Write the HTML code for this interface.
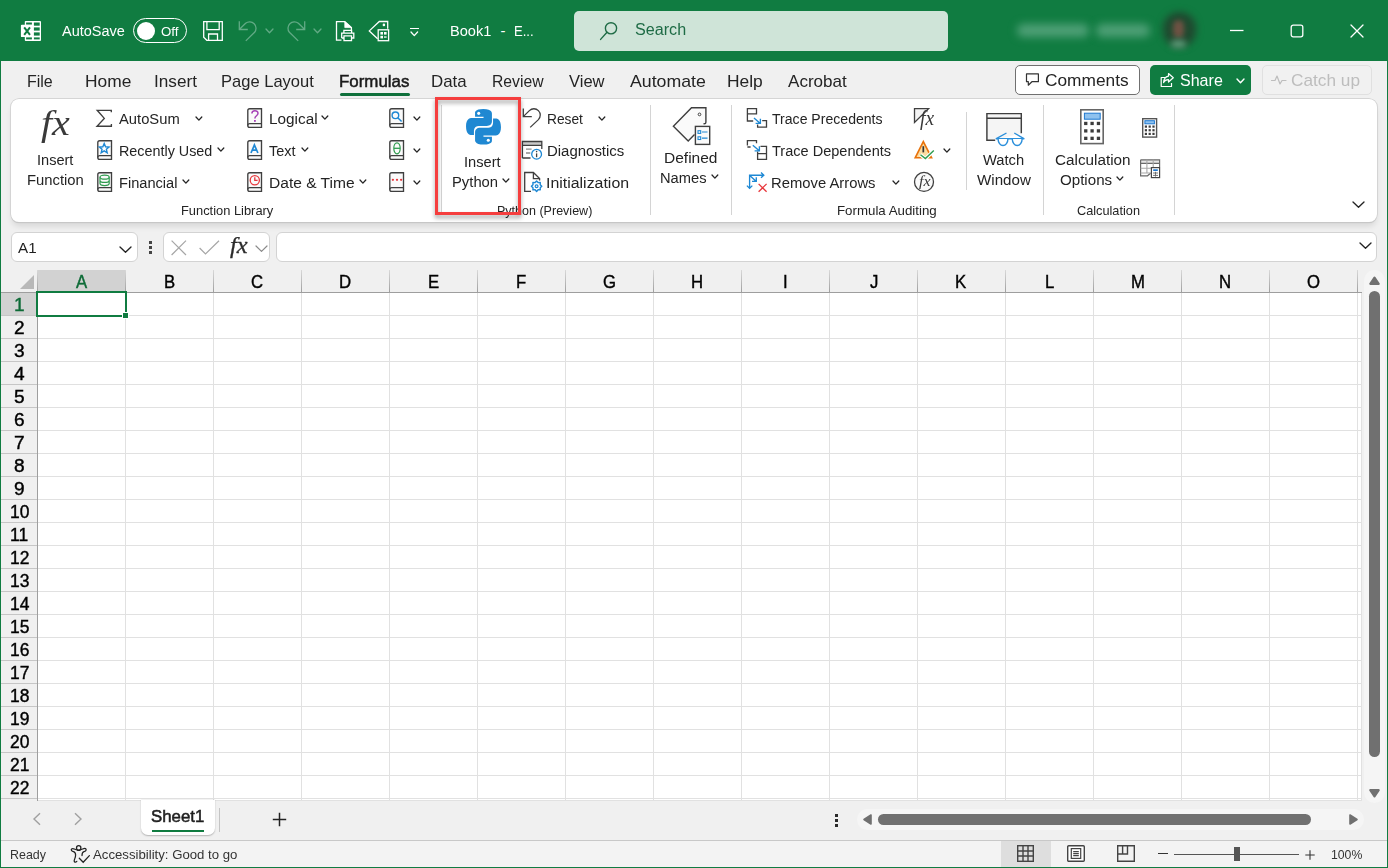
<!DOCTYPE html>
<html><head><meta charset="utf-8">
<style>
*{box-sizing:border-box;margin:0;padding:0}
html,body{width:1388px;height:868px;overflow:hidden;background:#f0f0f0;font-family:"Liberation Sans",sans-serif;color:#242424}
.a{position:absolute}
.t{position:absolute;white-space:nowrap;line-height:1}
svg{overflow:visible}
#win{position:absolute;left:0;top:0;width:1388px;height:868px;overflow:hidden;background:#f0f0f0}
</style></head><body><div id="win">
<div class="a" style="left:0px;top:0px;width:1388px;height:61px;background:#107c41;"></div>
<div class="t" style="left:62.30px;top:24.39px;font-size:14.9px;color:#fff;transform:scaleX(0.9734);transform-origin:0 0;font-family:'Liberation Sans',sans-serif;">AutoSave</div>
<div class="a" style="left:133px;top:18px;width:54px;height:25px;border:1.2px solid #fff;border-radius:13px"></div>
<div class="a" style="left:137px;top:22px;width:18px;height:18px;border-radius:9px;background:#fff"></div>
<div class="t" style="left:161.36px;top:25.59px;font-size:12.3px;color:#fff;transform:scaleX(1.0794);transform-origin:0 0;font-family:'Liberation Sans',sans-serif;">Off</div>
<div class="t" style="left:449.52px;top:24.39px;font-size:14.9px;color:#fff;transform:scaleX(0.9791);transform-origin:0 0;font-family:'Liberation Sans',sans-serif;">Book1</div>
<div class="t" style="left:500.50px;top:24.39px;font-size:14.9px;color:#fff;transform:scaleX(1.0000);transform-origin:0 0;font-family:'Liberation Sans',sans-serif;">-</div>
<div class="t" style="left:513.72px;top:24.39px;font-size:14.9px;color:#fff;transform:scaleX(0.8790);transform-origin:0 0;font-family:'Liberation Sans',sans-serif;">E...</div>
<div class="a" style="left:574px;top:11px;width:374px;height:40px;background:#cfe4d8;border-radius:5px"></div>
<svg class="a" style="left:598px;top:20px;" width="22" height="22" viewBox="0 0 22 22"><circle cx="13" cy="8.3" r="5.6" fill="none" stroke="#1e6b45" stroke-width="1.4"/><path d="M9 12.3 L2.6 19.4" stroke="#1e6b45" stroke-width="1.4" stroke-linecap="round"/></svg>
<div class="t" style="left:634.80px;top:22.46px;font-size:16px;color:#1e6b45;transform:scaleX(1.0091);transform-origin:0 0;font-family:'Liberation Sans',sans-serif;">Search</div>
<div class="a" style="left:1017px;top:24px;width:72px;height:13px;background:#4fa077;border-radius:6px;filter:blur(4px)"></div>
<div class="a" style="left:1096px;top:24px;width:54px;height:13px;background:#4fa077;border-radius:6px;filter:blur(4px)"></div>
<div class="a" style="left:1163px;top:12px;width:33px;height:35px;background:#1f4a30;border-radius:16px;filter:blur(3.5px)"></div>
<div class="a" style="left:1173px;top:20px;width:11px;height:18px;background:#6e5243;border-radius:6px;filter:blur(2.5px)"></div>
<div class="a" style="left:1171px;top:40px;width:15px;height:8px;background:#5d9a78;border-radius:4px;filter:blur(3px)"></div>
<svg class="a" style="left:1230px;top:25px;" width="14" height="12" viewBox="0 0 14 12"><path d="M0 5.5H13.5" stroke="#fff" stroke-width="1.3"/></svg>
<svg class="a" style="left:1290px;top:24px;" width="14" height="14" viewBox="0 0 14 14"><rect x="1.2" y="1.2" width="11.6" height="11.6" rx="2" fill="none" stroke="#fff" stroke-width="1.3"/></svg>
<svg class="a" style="left:1350px;top:24px;" width="14" height="14" viewBox="0 0 14 14"><path d="M1 1 L13 13 M13 1 L1 13" stroke="#fff" stroke-width="1.3" stroke-linecap="round"/></svg>
<div class="t" style="left:27.28px;top:73.12px;font-size:16.4px;color:#242424;transform:scaleX(0.9755);transform-origin:0 0;font-family:'Liberation Sans',sans-serif;">File</div>
<div class="t" style="left:84.68px;top:73.12px;font-size:16.4px;color:#242424;transform:scaleX(1.0595);transform-origin:0 0;font-family:'Liberation Sans',sans-serif;">Home</div>
<div class="t" style="left:154.03px;top:73.12px;font-size:16.4px;color:#242424;transform:scaleX(1.0481);transform-origin:0 0;font-family:'Liberation Sans',sans-serif;">Insert</div>
<div class="t" style="left:221.34px;top:73.12px;font-size:16.4px;color:#242424;transform:scaleX(1.0083);transform-origin:0 0;font-family:'Liberation Sans',sans-serif;">Page Layout</div>
<div class="t" style="left:338.71px;top:73.12px;font-size:16.4px;color:#1a1a1a;transform:scaleX(1.0307);transform-origin:0 0;font-family:'Liberation Sans',sans-serif;-webkit-text-stroke:.5px #1a1a1a;">Formulas</div>
<div class="a" style="left:339.5px;top:92.5px;width:70.5px;height:3px;background:#0f703b;border-radius:1.5px"></div>
<div class="t" style="left:431.31px;top:73.12px;font-size:16.4px;color:#242424;transform:scaleX(1.0299);transform-origin:0 0;font-family:'Liberation Sans',sans-serif;">Data</div>
<div class="t" style="left:491.80px;top:73.12px;font-size:16.4px;color:#242424;transform:scaleX(0.9592);transform-origin:0 0;font-family:'Liberation Sans',sans-serif;">Review</div>
<div class="t" style="left:569.00px;top:73.12px;font-size:16.4px;color:#242424;transform:scaleX(1.0085);transform-origin:0 0;font-family:'Liberation Sans',sans-serif;">View</div>
<div class="t" style="left:629.50px;top:73.12px;font-size:16.4px;color:#242424;transform:scaleX(1.0820);transform-origin:0 0;font-family:'Liberation Sans',sans-serif;">Automate</div>
<div class="t" style="left:727.47px;top:73.12px;font-size:16.4px;color:#242424;transform:scaleX(1.0614);transform-origin:0 0;font-family:'Liberation Sans',sans-serif;">Help</div>
<div class="t" style="left:787.70px;top:73.12px;font-size:16.4px;color:#242424;transform:scaleX(1.0407);transform-origin:0 0;font-family:'Liberation Sans',sans-serif;">Acrobat</div>
<div class="a" style="left:1015px;top:65px;width:125px;height:30px;background:#fff;border:1px solid #707070;border-radius:5px"></div>
<svg class="a" style="left:1025px;top:72px;" width="16" height="15" viewBox="0 0 16 15"><path d="M1.5 1.9 H13.4 V9.7 H6.9 L3.3 13.2 V9.7 H1.5 Z" fill="none" stroke="#333" stroke-width="1.2" stroke-linejoin="round"/></svg>
<div class="t" style="left:1044.71px;top:72.12px;font-size:16.4px;color:#242424;transform:scaleX(1.0551);transform-origin:0 0;font-family:'Liberation Sans',sans-serif;">Comments</div>
<div class="a" style="left:1150px;top:65px;width:101px;height:30px;background:#107c41;border-radius:5px"></div>
<svg class="a" style="left:1159px;top:72px;" width="16" height="16" viewBox="0 0 16 16"><path d="M6 5.5 H2.2 V14.5 H12.5 V11" fill="none" stroke="#fff" stroke-width="1.2" stroke-linejoin="round"/><path d="M9.5 1.5 L14.3 5.8 L9.5 10 V7.6 C7.2 7.5 5.6 8.4 4.6 10.6 C4.8 7 6.5 4.6 9.5 4.1 Z" fill="none" stroke="#fff" stroke-width="1.2" stroke-linejoin="round"/></svg>
<div class="t" style="left:1180.07px;top:72.12px;font-size:16.4px;color:#fff;transform:scaleX(0.9788);transform-origin:0 0;font-family:'Liberation Sans',sans-serif;">Share</div>
<svg class="a" style="left:1234.9px;top:76.5px;" width="11" height="7.8" viewBox="0 0 11 7.8"><path d="M2 2 L5.5 5.8 L9 2" fill="none" stroke="#fff" stroke-width="1.4" stroke-linecap="round" stroke-linejoin="round"/></svg>
<div class="a" style="left:1261.5px;top:65px;width:110.5px;height:30px;background:#f1f1f1;border:1px solid #e0e0e0;border-radius:5px"></div>
<svg class="a" style="left:1271px;top:73px;" width="16" height="14" viewBox="0 0 16 14"><path d="M.5 7.5 H4 L6 3 L9 11 L11 7.5 H15" fill="none" stroke="#bdbdbd" stroke-width="1.2" stroke-linejoin="round" stroke-linecap="round"/></svg>
<div class="t" style="left:1291.21px;top:72.12px;font-size:16.4px;color:#bdbdbd;transform:scaleX(1.0521);transform-origin:0 0;font-family:'Liberation Sans',sans-serif;">Catch up</div>
<div class="a" style="left:11px;top:99px;width:1366px;height:122.5px;background:#fff;border-radius:8px;box-shadow:0 0 0 .7px #cdcdcd,0 .6px .8px rgba(0,0,0,.18),0 5px 6px -1px rgba(0,0,0,.11)"></div>
<div class="a" style="left:441px;top:105px;width:1px;height:110px;background:#d4d4d4;"></div>
<div class="a" style="left:649.5px;top:105px;width:1px;height:110px;background:#d4d4d4;"></div>
<div class="a" style="left:731px;top:105px;width:1px;height:110px;background:#d4d4d4;"></div>
<div class="a" style="left:1043px;top:105px;width:1px;height:110px;background:#d4d4d4;"></div>
<div class="a" style="left:1174px;top:105px;width:1px;height:110px;background:#d4d4d4;"></div>
<div class="a" style="left:966px;top:112px;width:1px;height:78px;background:#d4d4d4;"></div>
<div class="t" style="left:37.46px;top:152.56px;font-size:14.7px;color:#242424;transform:scaleX(0.9915);transform-origin:0 0;font-family:'Liberation Sans',sans-serif;">Insert</div>
<div class="t" style="left:27.49px;top:172.56px;font-size:14.7px;color:#242424;transform:scaleX(1.0092);transform-origin:0 0;font-family:'Liberation Sans',sans-serif;">Function</div>
<div class="t" style="left:119.30px;top:111.56px;font-size:14.7px;color:#242424;transform:scaleX(1.0042);transform-origin:0 0;font-family:'Liberation Sans',sans-serif;">AutoSum</div>
<svg class="a" style="left:194.3px;top:115.05px;" width="9.8" height="7.1" viewBox="0 0 9.8 7.1"><path d="M2 2 L4.9 5.1 L7.8 2" fill="none" stroke="#242424" stroke-width="1.3" stroke-linecap="round" stroke-linejoin="round"/></svg>
<div class="t" style="left:118.72px;top:143.56px;font-size:14.7px;color:#242424;transform:scaleX(0.9771);transform-origin:0 0;font-family:'Liberation Sans',sans-serif;">Recently Used</div>
<svg class="a" style="left:215.6px;top:146.45px;" width="9.8" height="7.1" viewBox="0 0 9.8 7.1"><path d="M2 2 L4.9 5.1 L7.8 2" fill="none" stroke="#242424" stroke-width="1.3" stroke-linecap="round" stroke-linejoin="round"/></svg>
<div class="t" style="left:118.71px;top:175.56px;font-size:14.7px;color:#242424;transform:scaleX(0.9947);transform-origin:0 0;font-family:'Liberation Sans',sans-serif;">Financial</div>
<svg class="a" style="left:180.6px;top:177.95px;" width="9.8" height="7.1" viewBox="0 0 9.8 7.1"><path d="M2 2 L4.9 5.1 L7.8 2" fill="none" stroke="#242424" stroke-width="1.3" stroke-linecap="round" stroke-linejoin="round"/></svg>
<div class="t" style="left:268.56px;top:111.56px;font-size:14.7px;color:#242424;transform:scaleX(1.0436);transform-origin:0 0;font-family:'Liberation Sans',sans-serif;">Logical</div>
<svg class="a" style="left:320.4px;top:114.45px;" width="9.8" height="7.1" viewBox="0 0 9.8 7.1"><path d="M2 2 L4.9 5.1 L7.8 2" fill="none" stroke="#242424" stroke-width="1.3" stroke-linecap="round" stroke-linejoin="round"/></svg>
<div class="t" style="left:269.35px;top:143.56px;font-size:14.7px;color:#242424;transform:scaleX(0.9832);transform-origin:0 0;font-family:'Liberation Sans',sans-serif;">Text</div>
<svg class="a" style="left:299.6px;top:146.05px;" width="9.8" height="7.1" viewBox="0 0 9.8 7.1"><path d="M2 2 L4.9 5.1 L7.8 2" fill="none" stroke="#242424" stroke-width="1.3" stroke-linecap="round" stroke-linejoin="round"/></svg>
<div class="t" style="left:268.54px;top:175.56px;font-size:14.7px;color:#242424;transform:scaleX(1.0591);transform-origin:0 0;font-family:'Liberation Sans',sans-serif;">Date &amp; Time</div>
<svg class="a" style="left:357.6px;top:177.95px;" width="9.8" height="7.1" viewBox="0 0 9.8 7.1"><path d="M2 2 L4.9 5.1 L7.8 2" fill="none" stroke="#242424" stroke-width="1.3" stroke-linecap="round" stroke-linejoin="round"/></svg>
<svg class="a" style="left:412.4px;top:114.75px;" width="9.8" height="7.1" viewBox="0 0 9.8 7.1"><path d="M2 2 L4.9 5.1 L7.8 2" fill="none" stroke="#242424" stroke-width="1.3" stroke-linecap="round" stroke-linejoin="round"/></svg>
<svg class="a" style="left:412.4px;top:146.75px;" width="9.8" height="7.1" viewBox="0 0 9.8 7.1"><path d="M2 2 L4.9 5.1 L7.8 2" fill="none" stroke="#242424" stroke-width="1.3" stroke-linecap="round" stroke-linejoin="round"/></svg>
<svg class="a" style="left:412.4px;top:178.75px;" width="9.8" height="7.1" viewBox="0 0 9.8 7.1"><path d="M2 2 L4.9 5.1 L7.8 2" fill="none" stroke="#242424" stroke-width="1.3" stroke-linecap="round" stroke-linejoin="round"/></svg>
<div class="t" style="left:181.36px;top:204.50px;font-size:12.4px;color:#242424;transform:scaleX(1.0386);transform-origin:0 0;font-family:'Liberation Sans',sans-serif;">Function Library</div>
<div class="t" style="left:496.59px;top:204.50px;font-size:12.4px;color:#242424;transform:scaleX(1.0102);transform-origin:0 0;font-family:'Liberation Sans',sans-serif;">Python (Preview)</div>
<div class="t" style="left:464.05px;top:154.56px;font-size:14.7px;color:#242424;transform:scaleX(0.9972);transform-origin:0 0;font-family:'Liberation Sans',sans-serif;">Insert</div>
<div class="t" style="left:452.49px;top:174.56px;font-size:14.7px;color:#242424;transform:scaleX(1.0080);transform-origin:0 0;font-family:'Liberation Sans',sans-serif;">Python</div>
<svg class="a" style="left:501.4px;top:176.95px;" width="9.8" height="7.1" viewBox="0 0 9.8 7.1"><path d="M2 2 L4.9 5.1 L7.8 2" fill="none" stroke="#242424" stroke-width="1.3" stroke-linecap="round" stroke-linejoin="round"/></svg>
<div class="t" style="left:546.86px;top:111.56px;font-size:14.7px;color:#242424;transform:scaleX(0.9369);transform-origin:0 0;font-family:'Liberation Sans',sans-serif;">Reset</div>
<svg class="a" style="left:597.3px;top:114.75px;" width="9.8" height="7.1" viewBox="0 0 9.8 7.1"><path d="M2 2 L4.9 5.1 L7.8 2" fill="none" stroke="#242424" stroke-width="1.3" stroke-linecap="round" stroke-linejoin="round"/></svg>
<div class="t" style="left:546.78px;top:143.56px;font-size:14.7px;color:#242424;transform:scaleX(1.0181);transform-origin:0 0;font-family:'Liberation Sans',sans-serif;">Diagnostics</div>
<div class="t" style="left:546.45px;top:175.56px;font-size:14.7px;color:#242424;transform:scaleX(1.0823);transform-origin:0 0;font-family:'Liberation Sans',sans-serif;">Initialization</div>
<div class="t" style="left:663.74px;top:150.56px;font-size:14.7px;color:#242424;transform:scaleX(1.0564);transform-origin:0 0;font-family:'Liberation Sans',sans-serif;">Defined</div>
<div class="t" style="left:659.80px;top:170.56px;font-size:14.7px;color:#242424;transform:scaleX(0.9989);transform-origin:0 0;font-family:'Liberation Sans',sans-serif;">Names</div>
<svg class="a" style="left:709.8px;top:173.05px;" width="9.8" height="7.1" viewBox="0 0 9.8 7.1"><path d="M2 2 L4.9 5.1 L7.8 2" fill="none" stroke="#242424" stroke-width="1.3" stroke-linecap="round" stroke-linejoin="round"/></svg>
<div class="t" style="left:772.06px;top:111.56px;font-size:14.7px;color:#242424;transform:scaleX(0.9583);transform-origin:0 0;font-family:'Liberation Sans',sans-serif;">Trace Precedents</div>
<div class="t" style="left:772.05px;top:143.56px;font-size:14.7px;color:#242424;transform:scaleX(0.9896);transform-origin:0 0;font-family:'Liberation Sans',sans-serif;">Trace Dependents</div>
<div class="t" style="left:771.29px;top:175.56px;font-size:14.7px;color:#242424;transform:scaleX(1.0078);transform-origin:0 0;font-family:'Liberation Sans',sans-serif;">Remove Arrows</div>
<svg class="a" style="left:890.5px;top:178.65px;" width="9.8" height="7.1" viewBox="0 0 9.8 7.1"><path d="M2 2 L4.9 5.1 L7.8 2" fill="none" stroke="#242424" stroke-width="1.3" stroke-linecap="round" stroke-linejoin="round"/></svg>
<svg class="a" style="left:942.4px;top:147.05px;" width="9.8" height="7.1" viewBox="0 0 9.8 7.1"><path d="M2 2 L4.9 5.1 L7.8 2" fill="none" stroke="#242424" stroke-width="1.3" stroke-linecap="round" stroke-linejoin="round"/></svg>
<div class="t" style="left:837.43px;top:204.50px;font-size:12.4px;color:#242424;transform:scaleX(1.0721);transform-origin:0 0;font-family:'Liberation Sans',sans-serif;">Formula Auditing</div>
<div class="t" style="left:983.10px;top:152.56px;font-size:14.7px;color:#242424;transform:scaleX(1.0012);transform-origin:0 0;font-family:'Liberation Sans',sans-serif;">Watch</div>
<div class="t" style="left:976.70px;top:172.56px;font-size:14.7px;color:#242424;transform:scaleX(1.0305);transform-origin:0 0;font-family:'Liberation Sans',sans-serif;">Window</div>
<div class="t" style="left:1055.22px;top:152.56px;font-size:14.7px;color:#242424;transform:scaleX(1.0394);transform-origin:0 0;font-family:'Liberation Sans',sans-serif;">Calculation</div>
<div class="t" style="left:1059.89px;top:172.56px;font-size:14.7px;color:#242424;transform:scaleX(1.0291);transform-origin:0 0;font-family:'Liberation Sans',sans-serif;">Options</div>
<svg class="a" style="left:1115.4px;top:175.25px;" width="9.8" height="7.1" viewBox="0 0 9.8 7.1"><path d="M2 2 L4.9 5.1 L7.8 2" fill="none" stroke="#242424" stroke-width="1.3" stroke-linecap="round" stroke-linejoin="round"/></svg>
<div class="t" style="left:1077.19px;top:204.50px;font-size:12.4px;color:#242424;transform:scaleX(1.0274);transform-origin:0 0;font-family:'Liberation Sans',sans-serif;">Calculation</div>
<svg class="a" style="left:1351.1px;top:200.05px;" width="15" height="9.3" viewBox="0 0 15 9.3"><path d="M2 2 L7.5 7.3 L13 2" fill="none" stroke="#242424" stroke-width="1.35" stroke-linecap="round" stroke-linejoin="round"/></svg>
<div class="a" style="left:11px;top:232px;width:127px;height:30px;background:#fff;border:1px solid #d3d3d3;border-radius:6px"></div>
<div class="a" style="left:163px;top:232px;width:107px;height:30px;background:#fff;border:1px solid #d3d3d3;border-radius:6px"></div>
<div class="a" style="left:275.5px;top:232px;width:1101.5px;height:30px;background:#fff;border:1px solid #d3d3d3;border-radius:6px"></div>
<div class="t" style="left:18.40px;top:240.18px;font-size:15.5px;color:#1f1f1f;transform:scaleX(0.9808);transform-origin:0 0;font-family:'Liberation Sans',sans-serif;">A1</div>
<svg class="a" style="left:117.5px;top:244.85px;" width="15" height="9.3" viewBox="0 0 15 9.3"><path d="M2 2 L7.5 7.3 L13 2" fill="none" stroke="#242424" stroke-width="1.35" stroke-linecap="round" stroke-linejoin="round"/></svg>
<div class="a" style="left:149.3px;top:240.7px;width:3px;height:3px;background:#444;"></div>
<div class="a" style="left:149.3px;top:246px;width:3px;height:3px;background:#444;"></div>
<div class="a" style="left:149.3px;top:251.3px;width:3px;height:3px;background:#444;"></div>
<svg class="a" style="left:171px;top:239.5px;" width="16" height="16" viewBox="0 0 16 16"><path d="M.6 .6 L15 15 M15 .6 L.6 15" stroke="#a6a6a6" stroke-width="1.2"/></svg>
<svg class="a" style="left:198.5px;top:239.5px;" width="21" height="15" viewBox="0 0 21 15"><path d="M.6 8 L6.5 14 L20 .8" fill="none" stroke="#a6a6a6" stroke-width="1.2"/></svg>
<div class="t" style="left:230.13px;top:234.56px;font-size:22.5px;color:#2b2b2b;transform:scaleX(1.0875);transform-origin:0 0;font-family:'Liberation Serif',serif;font-style:italic;-webkit-text-stroke:.3px #2b2b2b;">fx</div>
<svg class="a" style="left:253.5px;top:243.5px;" width="15" height="9.4" viewBox="0 0 15 9.4"><path d="M2 2 L7.5 7.4 L13 2" fill="none" stroke="#8a8a8a" stroke-width="1.2" stroke-linecap="round" stroke-linejoin="round"/></svg>
<svg class="a" style="left:1358.1px;top:241.35px;" width="15" height="9.3" viewBox="0 0 15 9.3"><path d="M2 2 L7.5 7.3 L13 2" fill="none" stroke="#242424" stroke-width="1.35" stroke-linecap="round" stroke-linejoin="round"/></svg>
<div class="a" style="left:1px;top:270px;width:1361px;height:531px;background:#fff;"></div>
<div class="a" style="left:1px;top:270px;width:1361px;height:22px;background:#f0f0f0;"></div>
<div class="a" style="left:1px;top:292px;width:37px;height:509px;background:#f0f0f0;"></div>
<div class="a" style="left:37px;top:270px;width:89px;height:22px;background:#d2d2d2;"></div>
<div class="a" style="left:1px;top:293px;width:36px;height:22px;background:#d2d2d2;"></div>
<div class="a" style="left:125px;top:293px;width:1px;height:508px;background:#e1e1e1;"></div>
<div class="a" style="left:213px;top:293px;width:1px;height:508px;background:#e1e1e1;"></div>
<div class="a" style="left:301px;top:293px;width:1px;height:508px;background:#e1e1e1;"></div>
<div class="a" style="left:389px;top:293px;width:1px;height:508px;background:#e1e1e1;"></div>
<div class="a" style="left:477px;top:293px;width:1px;height:508px;background:#e1e1e1;"></div>
<div class="a" style="left:565px;top:293px;width:1px;height:508px;background:#e1e1e1;"></div>
<div class="a" style="left:653px;top:293px;width:1px;height:508px;background:#e1e1e1;"></div>
<div class="a" style="left:741px;top:293px;width:1px;height:508px;background:#e1e1e1;"></div>
<div class="a" style="left:829px;top:293px;width:1px;height:508px;background:#e1e1e1;"></div>
<div class="a" style="left:917px;top:293px;width:1px;height:508px;background:#e1e1e1;"></div>
<div class="a" style="left:1005px;top:293px;width:1px;height:508px;background:#e1e1e1;"></div>
<div class="a" style="left:1093px;top:293px;width:1px;height:508px;background:#e1e1e1;"></div>
<div class="a" style="left:1181px;top:293px;width:1px;height:508px;background:#e1e1e1;"></div>
<div class="a" style="left:1269px;top:293px;width:1px;height:508px;background:#e1e1e1;"></div>
<div class="a" style="left:1357px;top:293px;width:1px;height:508px;background:#e1e1e1;"></div>
<div class="a" style="left:1361px;top:293px;width:1px;height:508px;background:#e1e1e1;"></div>
<div class="a" style="left:38px;top:315px;width:1323px;height:1px;background:#e1e1e1;"></div>
<div class="a" style="left:1px;top:315px;width:36px;height:1px;background:#c6c6c6;"></div>
<div class="a" style="left:38px;top:338px;width:1323px;height:1px;background:#e1e1e1;"></div>
<div class="a" style="left:1px;top:338px;width:36px;height:1px;background:#c6c6c6;"></div>
<div class="a" style="left:38px;top:361px;width:1323px;height:1px;background:#e1e1e1;"></div>
<div class="a" style="left:1px;top:361px;width:36px;height:1px;background:#c6c6c6;"></div>
<div class="a" style="left:38px;top:384px;width:1323px;height:1px;background:#e1e1e1;"></div>
<div class="a" style="left:1px;top:384px;width:36px;height:1px;background:#c6c6c6;"></div>
<div class="a" style="left:38px;top:407px;width:1323px;height:1px;background:#e1e1e1;"></div>
<div class="a" style="left:1px;top:407px;width:36px;height:1px;background:#c6c6c6;"></div>
<div class="a" style="left:38px;top:430px;width:1323px;height:1px;background:#e1e1e1;"></div>
<div class="a" style="left:1px;top:430px;width:36px;height:1px;background:#c6c6c6;"></div>
<div class="a" style="left:38px;top:453px;width:1323px;height:1px;background:#e1e1e1;"></div>
<div class="a" style="left:1px;top:453px;width:36px;height:1px;background:#c6c6c6;"></div>
<div class="a" style="left:38px;top:476px;width:1323px;height:1px;background:#e1e1e1;"></div>
<div class="a" style="left:1px;top:476px;width:36px;height:1px;background:#c6c6c6;"></div>
<div class="a" style="left:38px;top:499px;width:1323px;height:1px;background:#e1e1e1;"></div>
<div class="a" style="left:1px;top:499px;width:36px;height:1px;background:#c6c6c6;"></div>
<div class="a" style="left:38px;top:522px;width:1323px;height:1px;background:#e1e1e1;"></div>
<div class="a" style="left:1px;top:522px;width:36px;height:1px;background:#c6c6c6;"></div>
<div class="a" style="left:38px;top:545px;width:1323px;height:1px;background:#e1e1e1;"></div>
<div class="a" style="left:1px;top:545px;width:36px;height:1px;background:#c6c6c6;"></div>
<div class="a" style="left:38px;top:568px;width:1323px;height:1px;background:#e1e1e1;"></div>
<div class="a" style="left:1px;top:568px;width:36px;height:1px;background:#c6c6c6;"></div>
<div class="a" style="left:38px;top:591px;width:1323px;height:1px;background:#e1e1e1;"></div>
<div class="a" style="left:1px;top:591px;width:36px;height:1px;background:#c6c6c6;"></div>
<div class="a" style="left:38px;top:614px;width:1323px;height:1px;background:#e1e1e1;"></div>
<div class="a" style="left:1px;top:614px;width:36px;height:1px;background:#c6c6c6;"></div>
<div class="a" style="left:38px;top:637px;width:1323px;height:1px;background:#e1e1e1;"></div>
<div class="a" style="left:1px;top:637px;width:36px;height:1px;background:#c6c6c6;"></div>
<div class="a" style="left:38px;top:660px;width:1323px;height:1px;background:#e1e1e1;"></div>
<div class="a" style="left:1px;top:660px;width:36px;height:1px;background:#c6c6c6;"></div>
<div class="a" style="left:38px;top:683px;width:1323px;height:1px;background:#e1e1e1;"></div>
<div class="a" style="left:1px;top:683px;width:36px;height:1px;background:#c6c6c6;"></div>
<div class="a" style="left:38px;top:706px;width:1323px;height:1px;background:#e1e1e1;"></div>
<div class="a" style="left:1px;top:706px;width:36px;height:1px;background:#c6c6c6;"></div>
<div class="a" style="left:38px;top:729px;width:1323px;height:1px;background:#e1e1e1;"></div>
<div class="a" style="left:1px;top:729px;width:36px;height:1px;background:#c6c6c6;"></div>
<div class="a" style="left:38px;top:752px;width:1323px;height:1px;background:#e1e1e1;"></div>
<div class="a" style="left:1px;top:752px;width:36px;height:1px;background:#c6c6c6;"></div>
<div class="a" style="left:38px;top:775px;width:1323px;height:1px;background:#e1e1e1;"></div>
<div class="a" style="left:1px;top:775px;width:36px;height:1px;background:#c6c6c6;"></div>
<div class="a" style="left:38px;top:798px;width:1323px;height:1px;background:#e1e1e1;"></div>
<div class="a" style="left:1px;top:798px;width:36px;height:1px;background:#c6c6c6;"></div>
<div class="a" style="left:38px;top:800px;width:1324px;height:1px;background:#e1e1e1;"></div>
<div class="a" style="left:37px;top:270px;width:1px;height:22px;background:linear-gradient(#d8d8d8,#a0a0a0)"></div>
<div class="a" style="left:125px;top:270px;width:1px;height:22px;background:linear-gradient(#d8d8d8,#a0a0a0)"></div>
<div class="a" style="left:213px;top:270px;width:1px;height:22px;background:linear-gradient(#d8d8d8,#a0a0a0)"></div>
<div class="a" style="left:301px;top:270px;width:1px;height:22px;background:linear-gradient(#d8d8d8,#a0a0a0)"></div>
<div class="a" style="left:389px;top:270px;width:1px;height:22px;background:linear-gradient(#d8d8d8,#a0a0a0)"></div>
<div class="a" style="left:477px;top:270px;width:1px;height:22px;background:linear-gradient(#d8d8d8,#a0a0a0)"></div>
<div class="a" style="left:565px;top:270px;width:1px;height:22px;background:linear-gradient(#d8d8d8,#a0a0a0)"></div>
<div class="a" style="left:653px;top:270px;width:1px;height:22px;background:linear-gradient(#d8d8d8,#a0a0a0)"></div>
<div class="a" style="left:741px;top:270px;width:1px;height:22px;background:linear-gradient(#d8d8d8,#a0a0a0)"></div>
<div class="a" style="left:829px;top:270px;width:1px;height:22px;background:linear-gradient(#d8d8d8,#a0a0a0)"></div>
<div class="a" style="left:917px;top:270px;width:1px;height:22px;background:linear-gradient(#d8d8d8,#a0a0a0)"></div>
<div class="a" style="left:1005px;top:270px;width:1px;height:22px;background:linear-gradient(#d8d8d8,#a0a0a0)"></div>
<div class="a" style="left:1093px;top:270px;width:1px;height:22px;background:linear-gradient(#d8d8d8,#a0a0a0)"></div>
<div class="a" style="left:1181px;top:270px;width:1px;height:22px;background:linear-gradient(#d8d8d8,#a0a0a0)"></div>
<div class="a" style="left:1269px;top:270px;width:1px;height:22px;background:linear-gradient(#d8d8d8,#a0a0a0)"></div>
<div class="a" style="left:1357px;top:270px;width:1px;height:22px;background:linear-gradient(#d8d8d8,#a0a0a0)"></div>
<div class="a" style="left:1px;top:292px;width:1361px;height:1px;background:#9e9e9e;"></div>
<div class="a" style="left:37px;top:293px;width:1px;height:508px;background:#9e9e9e;"></div>
<svg class="a" style="left:19px;top:274px;" width="16" height="16" viewBox="0 0 16 16"><path d="M15 1 V15 H1 Z" fill="#b8b8b8"/></svg>
<div class="t" style="left:75.92px;top:272.76px;font-size:18px;color:#0e6b37;transform:scaleX(0.9300);transform-origin:0 0;font-family:'Liberation Sans',sans-serif;-webkit-text-stroke:.4px #0e6b37;">A</div>
<div class="t" style="left:163.69px;top:272.76px;font-size:18px;color:#000;transform:scaleX(0.9300);transform-origin:0 0;font-family:'Liberation Sans',sans-serif;-webkit-text-stroke:.4px #000;">B</div>
<div class="t" style="left:251.34px;top:272.76px;font-size:18px;color:#000;transform:scaleX(0.9300);transform-origin:0 0;font-family:'Liberation Sans',sans-serif;-webkit-text-stroke:.4px #000;">C</div>
<div class="t" style="left:339.22px;top:272.76px;font-size:18px;color:#000;transform:scaleX(0.9300);transform-origin:0 0;font-family:'Liberation Sans',sans-serif;-webkit-text-stroke:.4px #000;">D</div>
<div class="t" style="left:427.69px;top:272.76px;font-size:18px;color:#000;transform:scaleX(0.9300);transform-origin:0 0;font-family:'Liberation Sans',sans-serif;-webkit-text-stroke:.4px #000;">E</div>
<div class="t" style="left:516.04px;top:272.76px;font-size:18px;color:#000;transform:scaleX(0.9300);transform-origin:0 0;font-family:'Liberation Sans',sans-serif;-webkit-text-stroke:.4px #000;">F</div>
<div class="t" style="left:603.22px;top:272.76px;font-size:18px;color:#000;transform:scaleX(0.9300);transform-origin:0 0;font-family:'Liberation Sans',sans-serif;-webkit-text-stroke:.4px #000;">G</div>
<div class="t" style="left:691.45px;top:272.76px;font-size:18px;color:#000;transform:scaleX(0.9300);transform-origin:0 0;font-family:'Liberation Sans',sans-serif;-webkit-text-stroke:.4px #000;">H</div>
<div class="t" style="left:783.18px;top:272.76px;font-size:18px;color:#000;transform:scaleX(0.9300);transform-origin:0 0;font-family:'Liberation Sans',sans-serif;-webkit-text-stroke:.4px #000;">I</div>
<div class="t" style="left:869.78px;top:272.76px;font-size:18px;color:#000;transform:scaleX(0.9300);transform-origin:0 0;font-family:'Liberation Sans',sans-serif;-webkit-text-stroke:.4px #000;">J</div>
<div class="t" style="left:955.34px;top:272.76px;font-size:18px;color:#000;transform:scaleX(0.9300);transform-origin:0 0;font-family:'Liberation Sans',sans-serif;-webkit-text-stroke:.4px #000;">K</div>
<div class="t" style="left:1044.50px;top:272.76px;font-size:18px;color:#000;transform:scaleX(0.9300);transform-origin:0 0;font-family:'Liberation Sans',sans-serif;-webkit-text-stroke:.4px #000;">L</div>
<div class="t" style="left:1130.53px;top:272.76px;font-size:18px;color:#000;transform:scaleX(0.9300);transform-origin:0 0;font-family:'Liberation Sans',sans-serif;-webkit-text-stroke:.4px #000;">M</div>
<div class="t" style="left:1219.46px;top:272.76px;font-size:18px;color:#000;transform:scaleX(0.9300);transform-origin:0 0;font-family:'Liberation Sans',sans-serif;-webkit-text-stroke:.4px #000;">N</div>
<div class="t" style="left:1306.99px;top:272.76px;font-size:18px;color:#000;transform:scaleX(0.9300);transform-origin:0 0;font-family:'Liberation Sans',sans-serif;-webkit-text-stroke:.4px #000;">O</div>
<div class="t" style="left:13.63px;top:295.56px;font-size:18px;color:#0e6b37;transform:scaleX(1.0600);transform-origin:0 0;font-family:'Liberation Sans',sans-serif;-webkit-text-stroke:.4px #0e6b37;">1</div>
<div class="t" style="left:13.90px;top:318.56px;font-size:18px;color:#000;transform:scaleX(1.0600);transform-origin:0 0;font-family:'Liberation Sans',sans-serif;-webkit-text-stroke:.4px #000;">2</div>
<div class="t" style="left:14.03px;top:341.56px;font-size:18px;color:#000;transform:scaleX(1.0600);transform-origin:0 0;font-family:'Liberation Sans',sans-serif;-webkit-text-stroke:.4px #000;">3</div>
<div class="t" style="left:14.03px;top:364.56px;font-size:18px;color:#000;transform:scaleX(1.0600);transform-origin:0 0;font-family:'Liberation Sans',sans-serif;-webkit-text-stroke:.4px #000;">4</div>
<div class="t" style="left:13.90px;top:387.56px;font-size:18px;color:#000;transform:scaleX(1.0600);transform-origin:0 0;font-family:'Liberation Sans',sans-serif;-webkit-text-stroke:.4px #000;">5</div>
<div class="t" style="left:13.90px;top:410.56px;font-size:18px;color:#000;transform:scaleX(1.0600);transform-origin:0 0;font-family:'Liberation Sans',sans-serif;-webkit-text-stroke:.4px #000;">6</div>
<div class="t" style="left:13.90px;top:433.56px;font-size:18px;color:#000;transform:scaleX(1.0600);transform-origin:0 0;font-family:'Liberation Sans',sans-serif;-webkit-text-stroke:.4px #000;">7</div>
<div class="t" style="left:13.90px;top:456.56px;font-size:18px;color:#000;transform:scaleX(1.0600);transform-origin:0 0;font-family:'Liberation Sans',sans-serif;-webkit-text-stroke:.4px #000;">8</div>
<div class="t" style="left:13.90px;top:479.56px;font-size:18px;color:#000;transform:scaleX(1.0600);transform-origin:0 0;font-family:'Liberation Sans',sans-serif;-webkit-text-stroke:.4px #000;">9</div>
<div class="t" style="left:9.54px;top:502.56px;font-size:18px;color:#000;transform:scaleX(0.9700);transform-origin:0 0;font-family:'Liberation Sans',sans-serif;-webkit-text-stroke:.4px #000;">10</div>
<div class="t" style="left:10.26px;top:525.56px;font-size:18px;color:#000;transform:scaleX(0.9700);transform-origin:0 0;font-family:'Liberation Sans',sans-serif;-webkit-text-stroke:.4px #000;">11</div>
<div class="t" style="left:9.66px;top:548.56px;font-size:18px;color:#000;transform:scaleX(0.9700);transform-origin:0 0;font-family:'Liberation Sans',sans-serif;-webkit-text-stroke:.4px #000;">12</div>
<div class="t" style="left:9.66px;top:571.56px;font-size:18px;color:#000;transform:scaleX(0.9700);transform-origin:0 0;font-family:'Liberation Sans',sans-serif;-webkit-text-stroke:.4px #000;">13</div>
<div class="t" style="left:9.54px;top:594.56px;font-size:18px;color:#000;transform:scaleX(0.9700);transform-origin:0 0;font-family:'Liberation Sans',sans-serif;-webkit-text-stroke:.4px #000;">14</div>
<div class="t" style="left:9.54px;top:617.56px;font-size:18px;color:#000;transform:scaleX(0.9700);transform-origin:0 0;font-family:'Liberation Sans',sans-serif;-webkit-text-stroke:.4px #000;">15</div>
<div class="t" style="left:9.66px;top:640.56px;font-size:18px;color:#000;transform:scaleX(0.9700);transform-origin:0 0;font-family:'Liberation Sans',sans-serif;-webkit-text-stroke:.4px #000;">16</div>
<div class="t" style="left:9.66px;top:663.56px;font-size:18px;color:#000;transform:scaleX(0.9700);transform-origin:0 0;font-family:'Liberation Sans',sans-serif;-webkit-text-stroke:.4px #000;">17</div>
<div class="t" style="left:9.66px;top:686.56px;font-size:18px;color:#000;transform:scaleX(0.9700);transform-origin:0 0;font-family:'Liberation Sans',sans-serif;-webkit-text-stroke:.4px #000;">18</div>
<div class="t" style="left:9.66px;top:709.56px;font-size:18px;color:#000;transform:scaleX(0.9700);transform-origin:0 0;font-family:'Liberation Sans',sans-serif;-webkit-text-stroke:.4px #000;">19</div>
<div class="t" style="left:9.78px;top:732.56px;font-size:18px;color:#000;transform:scaleX(0.9700);transform-origin:0 0;font-family:'Liberation Sans',sans-serif;-webkit-text-stroke:.4px #000;">20</div>
<div class="t" style="left:9.90px;top:755.56px;font-size:18px;color:#000;transform:scaleX(0.9700);transform-origin:0 0;font-family:'Liberation Sans',sans-serif;-webkit-text-stroke:.4px #000;">21</div>
<div class="t" style="left:9.90px;top:778.56px;font-size:18px;color:#000;transform:scaleX(0.9700);transform-origin:0 0;font-family:'Liberation Sans',sans-serif;-webkit-text-stroke:.4px #000;">22</div>
<div class="a" style="left:36px;top:291px;width:91px;height:26px;border:2px solid #107c41"></div>
<div class="a" style="left:122px;top:312px;width:7px;height:7px;background:#107c41;border:1px solid #fff"></div>
<div class="a" style="left:1363.5px;top:270px;width:21.5px;height:533px;background:#f5f5f5;border-radius:11px"></div>
<div class="a" style="left:1369px;top:291px;width:11px;height:466px;background:#707070;border-radius:5.5px"></div>
<svg class="a" style="left:1369px;top:275.5px;" width="11" height="9" viewBox="0 0 11 9"><path d="M5.5 1.6 L9.7 7.8 H1.3 Z" fill="#707070" stroke="#707070" stroke-width="2.2" stroke-linejoin="round"/></svg>
<svg class="a" style="left:1369px;top:788.6px;" width="11" height="9" viewBox="0 0 11 9"><path d="M5.5 7.4 L9.7 1.2 H1.3 Z" fill="#707070" stroke="#707070" stroke-width="2.2" stroke-linejoin="round"/></svg>
<div class="a" style="left:141px;top:800px;width:74px;height:35px;background:#fff;border-radius:0 0 7px 7px;box-shadow:0 .5px 1.5px rgba(0,0,0,.25)"></div>
<div class="t" style="left:151.27px;top:808.27px;font-size:17.4px;color:#1f1f1f;transform:scaleX(0.9674);transform-origin:0 0;font-family:'Liberation Sans',sans-serif;-webkit-text-stroke:.55px #1f1f1f;">Sheet1</div>
<div class="a" style="left:152px;top:829.5px;width:52px;height:2.2px;background:#107c41;"></div>
<div class="a" style="left:219px;top:808px;width:1px;height:24px;background:#c4c4c4;"></div>
<svg class="a" style="left:32px;top:812px;" width="10" height="14" viewBox="0 0 10 14"><path d="M8 1.2 L2 7 L8 12.8" fill="none" stroke="#a0a0a0" stroke-width="1.4"/></svg>
<svg class="a" style="left:72.5px;top:812px;" width="10" height="14" viewBox="0 0 10 14"><path d="M2 1.2 L8 7 L2 12.8" fill="none" stroke="#a0a0a0" stroke-width="1.4"/></svg>
<svg class="a" style="left:272px;top:812px;" width="15" height="15" viewBox="0 0 15 15"><path d="M7.5 .8 V14.2 M.8 7.5 H14.2" stroke="#222" stroke-width="1.5"/></svg>
<div class="a" style="left:835.3px;top:813.8px;width:2.9px;height:3px;background:#2a2a2a;"></div>
<div class="a" style="left:835.3px;top:818.9px;width:2.9px;height:3px;background:#2a2a2a;"></div>
<div class="a" style="left:835.3px;top:824px;width:2.9px;height:3px;background:#2a2a2a;"></div>
<div class="a" style="left:857px;top:809px;width:507px;height:21px;background:#f5f5f5;border-radius:10.5px"></div>
<div class="a" style="left:878px;top:814px;width:433px;height:11px;background:#707070;border-radius:5.5px"></div>
<svg class="a" style="left:863px;top:814px;" width="9" height="11" viewBox="0 0 9 11"><path d="M1 5.5 L8 1 V10 Z" fill="#707070" stroke="#707070" stroke-width="1.6" stroke-linejoin="round"/></svg>
<svg class="a" style="left:1349px;top:814px;" width="9" height="11" viewBox="0 0 9 11"><path d="M8 5.5 L1 1 V10 Z" fill="#707070" stroke="#707070" stroke-width="1.6" stroke-linejoin="round"/></svg>
<div class="a" style="left:1px;top:840px;width:1386px;height:27px;background:#f3f3f3;"></div>
<div class="a" style="left:1px;top:840px;width:1386px;height:1px;background:#c8c8c8;"></div>
<div class="t" style="left:9.96px;top:847.94px;font-size:13.3px;color:#333;transform:scaleX(0.9360);transform-origin:0 0;font-family:'Liberation Sans',sans-serif;">Ready</div>
<div class="t" style="left:93.40px;top:847.94px;font-size:13.3px;color:#333;transform:scaleX(0.9921);transform-origin:0 0;font-family:'Liberation Sans',sans-serif;">Accessibility: Good to go</div>
<div class="a" style="left:1001px;top:841px;width:50px;height:26px;background:#dedede;"></div>
<div class="t" style="left:1331.28px;top:848.55px;font-size:12.7px;color:#333;transform:scaleX(0.9651);transform-origin:0 0;font-family:'Liberation Sans',sans-serif;">100%</div>
<div class="a" style="left:1158px;top:853px;width:9.5px;height:1px;background:#333;"></div>
<div class="a" style="left:1174px;top:854px;width:125px;height:1px;background:#555;"></div>
<div class="a" style="left:1234px;top:847px;width:6px;height:14px;background:#555;"></div>
<svg class="a" style="left:1305px;top:849.5px;" width="10" height="10" viewBox="0 0 10 10"><path d="M5 .3 V9.7 M.3 5 H9.7" stroke="#333" stroke-width="1.1"/></svg>
<div class="a" style="left:0px;top:61px;width:1px;height:807px;background:#107c41;"></div>
<div class="a" style="left:1387px;top:61px;width:1px;height:807px;background:#107c41;"></div>
<div class="a" style="left:0px;top:867px;width:1388px;height:1px;background:#107c41;"></div>
<svg class="a" style="left:20px;top:20px;" width="22" height="22" viewBox="0 0 22 22"><rect x="4.8" y=".9" width="16.2" height="20.1" rx=".9" fill="#fff"/><rect x="6.1" y="2.5" width="5.8" height="2.2" fill="#107c41"/><rect x="13.9" y="2.5" width="5.8" height="3.2" fill="#107c41"/><rect x="6.1" y="17.4" width="5.8" height="2" fill="#107c41"/><rect x="13.9" y="17.4" width="5.8" height="2" fill="#107c41"/><rect x="13.9" y="7.4" width="5.8" height="3.2" fill="#107c41"/><rect x="13.9" y="12.4" width="5.8" height="3.2" fill="#107c41"/><rect x=".9" y="4.8" width="12.1" height="12.3" rx=".9" fill="#fff"/><path d="M4.2 7.4 L10 14.8 M10 7.4 L4.2 14.8" stroke="#107c41" stroke-width="2" /></svg>
<svg class="a" style="left:203px;top:21px;" width="20" height="20" viewBox="0 0 20 20"><path d="M.7 .7 H19.3 V19.3 H3.8 L.7 16.2 Z M3.9 .7 V8.6 H16.2 V.7 M5.6 19.3 V13 H14.5 V19.3" fill="none" stroke="#fff" stroke-width="1.3" stroke-linejoin="miter"/></svg>
<svg class="a" style="left:237px;top:19px;" width="22" height="24" viewBox="0 0 22 24"><path d="M2.3 2.3 V10.5 H10.8 M2.5 10.3 L8.6 4.3 A6.4 6.4 0 0 1 17.6 13.3 L8.8 21.9" fill="none" stroke="#62aa85" stroke-width="1.3" stroke-linejoin="miter"/></svg>
<svg class="a" style="left:285px;top:19px;" width="22" height="24" viewBox="0 0 22 24"><path d="M19.7 2.3 V10.5 H11.2 M19.5 10.3 L13.4 4.3 A6.4 6.4 0 0 0 4.4 13.3 L13.2 21.9" fill="none" stroke="#62aa85" stroke-width="1.3" stroke-linejoin="miter"/></svg>
<svg class="a" style="left:263.9px;top:26.8px;" width="11" height="7.8" viewBox="0 0 11 7.8"><path d="M2 2 L5.5 5.8 L9 2" fill="none" stroke="#62aa85" stroke-width="1.3" stroke-linecap="round" stroke-linejoin="round"/></svg>
<svg class="a" style="left:311.9px;top:26.8px;" width="11" height="7.8" viewBox="0 0 11 7.8"><path d="M2 2 L5.5 5.8 L9 2" fill="none" stroke="#62aa85" stroke-width="1.3" stroke-linecap="round" stroke-linejoin="round"/></svg>
<svg class="a" style="left:335px;top:20px;" width="20" height="22" viewBox="0 0 20 22"><path d="M6.5 20.2 H1.5 V1.7 H9.8 L16.4 7.6 V10" fill="none" stroke="#fff" stroke-width="1.3"/><path d="M9.8 1.7 V7.6 H16.4 Z" fill="#fff" stroke="#fff" stroke-width=".8"/><path d="M6.7 18 V13.2 H18.8 V18 H16.5 M9 18 H6.7 M8.9 13 V10.3 H16.6 V13 M9 15.8 H16.5 V20.6 H9 Z" fill="none" stroke="#fff" stroke-width="1.3"/></svg>
<svg class="a" style="left:368px;top:20px;" width="22" height="22" viewBox="0 0 22 22"><path d="M9.6 18.8 L1.3 10.9 L11.3 1.5 H19.7 V8.8" fill="none" stroke="#fff" stroke-width="1.3"/><circle cx="15.9" cy="4.9" r="1.3" fill="#fff"/><rect x="10.2" y="9.8" width="10.4" height="10.9" fill="none" stroke="#fff" stroke-width="1.3"/><rect x="12.4" y="12" width="2.6" height="2.6" fill="#fff"/><rect x="16" y="12" width="2.6" height="2.6" fill="#fff"/><rect x="12.4" y="15.8" width="2.6" height="2.6" fill="#fff"/><rect x="16" y="16.4" width="2.6" height="1.3" fill="#fff"/></svg>
<div class="a" style="left:410px;top:27.7px;width:9px;height:1.3px;background:#fff;"></div>
<svg class="a" style="left:409.1px;top:29.7px;" width="10.6" height="7.6" viewBox="0 0 10.6 7.6"><path d="M2 2 L5.3 5.6 L8.6 2" fill="none" stroke="#fff" stroke-width="1.3" stroke-linecap="round" stroke-linejoin="round"/></svg>
<div class="t" style="left:41.03px;top:104.63px;font-size:36.5px;color:#3a3a3a;transform:scaleX(1.0962);transform-origin:0 0;font-family:'Liberation Serif',serif;font-style:italic;">fx</div>
<svg class="a" style="left:95px;top:108px;" width="19" height="20" viewBox="0 0 19 20"><path d="M16.3 4.3 V2.3 H2.2 L9.3 10.4 L2 18.2 H16.4 V16.1" fill="none" stroke="#3f3f3f" stroke-width="1.35" stroke-linejoin="miter"/></svg>
<svg class="a" style="left:96.9px;top:139.7px;" width="16" height="21" viewBox="0 0 16 21"><path d="M14.5 .7 H2.7 Q.8 .7 .8 2.6 V17.4 Q.8 19.4 2.7 19.4 H14.5 Z" fill="#fafafa" stroke="#3f3f3f" stroke-width="1.35"/><path d="M.8 17.6 Q.8 15.7 2.7 15.7 H14.5" fill="none" stroke="#3f3f3f" stroke-width="1.25"/><path d="M7.20 3.50 L8.55 6.74 L12.05 7.02 L9.39 9.31 L10.20 12.73 L7.20 10.90 L4.20 12.73 L5.01 9.31 L2.35 7.02 L5.85 6.74Z" fill="#fff" stroke="#1e88d4" stroke-width="1.4" stroke-linejoin="miter"/></svg>
<svg class="a" style="left:96.9px;top:171.7px;" width="16" height="21" viewBox="0 0 16 21"><path d="M14.5 .7 H2.7 Q.8 .7 .8 2.6 V17.4 Q.8 19.4 2.7 19.4 H14.5 Z" fill="#fafafa" stroke="#3f3f3f" stroke-width="1.35"/><path d="M.8 17.6 Q.8 15.7 2.7 15.7 H14.5" fill="none" stroke="#3f3f3f" stroke-width="1.25"/><path d="M3 5.2 V11.6 C3 14.2 12.2 14.2 12.2 11.6 V5.2 M3 8.4 C3 11 12.2 11 12.2 8.4" fill="none" stroke="#2e9b4e" stroke-width="1.2"/><ellipse cx="7.6" cy="5.2" rx="4.6" ry="2" fill="none" stroke="#2e9b4e" stroke-width="1.2"/></svg>
<svg class="a" style="left:246.6px;top:107.7px;" width="16" height="21" viewBox="0 0 16 21"><path d="M14.5 .7 H2.7 Q.8 .7 .8 2.6 V17.4 Q.8 19.4 2.7 19.4 H14.5 Z" fill="#fafafa" stroke="#3f3f3f" stroke-width="1.35"/><path d="M.8 17.6 Q.8 15.7 2.7 15.7 H14.5" fill="none" stroke="#3f3f3f" stroke-width="1.25"/><path d="M4.9 5.6 C4.9 1.9 11 1.9 11 5.3 C11 7.8 7.9 7.7 7.9 10.5" fill="none" stroke="#a642b6" stroke-width="1.5"/><rect x="7" y="12" width="1.8" height="1.8" fill="#a642b6"/></svg>
<svg class="a" style="left:246.6px;top:139.7px;" width="16" height="21" viewBox="0 0 16 21"><path d="M14.5 .7 H2.7 Q.8 .7 .8 2.6 V17.4 Q.8 19.4 2.7 19.4 H14.5 Z" fill="#fafafa" stroke="#3f3f3f" stroke-width="1.35"/><path d="M.8 17.6 Q.8 15.7 2.7 15.7 H14.5" fill="none" stroke="#3f3f3f" stroke-width="1.25"/><path d="M4 13 L7.4 4.9 L10.9 13 M5.2 10.2 H9.7" fill="none" stroke="#1e88d4" stroke-width="1.7"/></svg>
<svg class="a" style="left:246.6px;top:171.7px;" width="16" height="21" viewBox="0 0 16 21"><path d="M14.5 .7 H2.7 Q.8 .7 .8 2.6 V17.4 Q.8 19.4 2.7 19.4 H14.5 Z" fill="#fafafa" stroke="#3f3f3f" stroke-width="1.35"/><path d="M.8 17.6 Q.8 15.7 2.7 15.7 H14.5" fill="none" stroke="#3f3f3f" stroke-width="1.25"/><circle cx="7.8" cy="8.2" r="4.6" fill="none" stroke="#e8383d" stroke-width="1.3"/><path d="M7.8 5.2 V8.4 H10.6" fill="none" stroke="#e8383d" stroke-width="1.3"/></svg>
<svg class="a" style="left:388.6px;top:107.7px;" width="16" height="21" viewBox="0 0 16 21"><path d="M14.5 .7 H2.7 Q.8 .7 .8 2.6 V17.4 Q.8 19.4 2.7 19.4 H14.5 Z" fill="#fafafa" stroke="#3f3f3f" stroke-width="1.35"/><path d="M.8 17.6 Q.8 15.7 2.7 15.7 H14.5" fill="none" stroke="#3f3f3f" stroke-width="1.25"/><circle cx="6.4" cy="7.3" r="3.3" fill="none" stroke="#1e88d4" stroke-width="1.4"/><path d="M8.8 9.7 L12.6 13.5" stroke="#1e88d4" stroke-width="1.5"/></svg>
<svg class="a" style="left:388.6px;top:139.7px;" width="16" height="21" viewBox="0 0 16 21"><path d="M14.5 .7 H2.7 Q.8 .7 .8 2.6 V17.4 Q.8 19.4 2.7 19.4 H14.5 Z" fill="#fafafa" stroke="#3f3f3f" stroke-width="1.35"/><path d="M.8 17.6 Q.8 15.7 2.7 15.7 H14.5" fill="none" stroke="#3f3f3f" stroke-width="1.25"/><ellipse cx="8" cy="8.3" rx="3.2" ry="5.5" fill="none" stroke="#2e9b4e" stroke-width="1.2"/><path d="M5 8.3 H11" stroke="#2e9b4e" stroke-width="1.3"/></svg>
<svg class="a" style="left:388.6px;top:171.7px;" width="16" height="21" viewBox="0 0 16 21"><path d="M14.5 .7 H2.7 Q.8 .7 .8 2.6 V17.4 Q.8 19.4 2.7 19.4 H14.5 Z" fill="#fafafa" stroke="#3f3f3f" stroke-width="1.35"/><path d="M.8 17.6 Q.8 15.7 2.7 15.7 H14.5" fill="none" stroke="#3f3f3f" stroke-width="1.25"/><circle cx="3.9" cy="7.8" r="1.15" fill="#e8383d"/><circle cx="8" cy="7.8" r="1.15" fill="#e8383d"/><circle cx="12.1" cy="7.8" r="1.15" fill="#e8383d"/></svg>
<svg class="a" style="left:465.5px;top:109px;" width="35.2" height="35.8" viewBox="0 0 110 112"><path fill="#1f88d2" d="M54.3 0 C26.5 0 28.3 12 28.3 12 L28.3 24.5 H54.8 V28.3 H17.8 C17.8 28.3 0 26.3 0 54.3 C0 82.400 15.500 81.400 15.500 81.400 H24.8 V68.400 C24.8 68.400 24.300 52.900 40.100 52.900 H66.300 C66.300 52.900 81.100 53.100 81.100 38.600 V14.600 C81.100 14.600 83.300 0 54.300 0 Z"/><circle cx="39.7" cy="13.6" r="4.8" fill="#fff"/><path fill="#1f88d2" d="M55.100 111.300 C82.900 111.300 81.100 99.300 81.100 99.300 L81.100 86.800 H54.600 V83 H91.600 C91.600 83 109.400 85 109.400 57 C109.400 28.900 93.900 29.900 93.900 29.900 H84.600 V42.900 C84.600 42.900 85.100 58.400 69.300 58.400 H43.100 C43.100 58.400 28.300 58.200 28.300 72.700 V96.700 C28.300 96.700 26.100 111.300 55.100 111.300 Z"/><circle cx="69.7" cy="97.700" r="4.8" fill="#fff"/></svg>
<svg class="a" style="left:521px;top:106px;" width="22" height="24" viewBox="0 0 22 24"><path d="M2.3 2.6 V10.6 H10.8 M2.5 10.4 L8.4 4.6 A6.3 6.3 0 0 1 17.4 13.6 L9.2 21.4" fill="none" stroke="#3f3f3f" stroke-width="1.3"/></svg>
<svg class="a" style="left:521px;top:140px;" width="22" height="20" viewBox="0 0 22 20"><rect x="1.4" y="1.5" width="19.4" height="3.8" fill="#c8c8c8"/><path d="M1.4 18 V1.5 H20.8 V9 M1.4 5.3 H20.8 M1.4 18 H9.5" fill="none" stroke="#3f3f3f" stroke-width="1.3"/><path d="M5 9.2 H10.6 M5 13 H9.3" stroke="#8a8a8a" stroke-width="1.3"/><circle cx="15.6" cy="14.2" r="4.9" fill="#fff" stroke="#1e88d4" stroke-width="1.3"/><path d="M15.6 13.4 V17.2" stroke="#3f3f3f" stroke-width="1.3"/><circle cx="15.6" cy="11.6" r=".8" fill="#3f3f3f"/></svg>
<svg class="a" style="left:523px;top:171px;" width="20" height="22" viewBox="0 0 20 22"><path d="M8 20.3 H1.7 V1.5 H10.4 L16.6 7.6 V9.5 M10.4 1.5 V7.6 H16.6" fill="none" stroke="#3f3f3f" stroke-width="1.3"/><path d="M18.80 15.20 L17.20 16.69 L17.28 18.88 L15.09 18.80 L13.60 20.40 L12.11 18.80 L9.92 18.88 L10.00 16.69 L8.40 15.20 L10.00 13.71 L9.92 11.52 L12.11 11.60 L13.60 10.00 L15.09 11.60 L17.28 11.52 L17.20 13.71Z" fill="#fff" stroke="#1e88d4" stroke-width="1.4" stroke-linejoin="round"/><circle cx="13.6" cy="15.2" r="1.4" fill="none" stroke="#1e88d4" stroke-width="1.2"/></svg>
<svg class="a" style="left:672px;top:106px;" width="40" height="40" viewBox="0 0 40 40"><path d="M22.5 28.6 L16.2 34.9 L1.4 20.3 L19.5 1.7 H33.9 V16.2 Q33.9 17.8 32.3 17.8 H31.5" fill="#fafafa" stroke="#3f3f3f" stroke-width="1.4" stroke-linejoin="miter"/><circle cx="27.5" cy="8.4" r="1.35" fill="#fff" stroke="#3f3f3f" stroke-width="1"/><rect x="23.4" y="20.4" width="14.3" height="18" fill="#fafafa" stroke="#3f3f3f" stroke-width="1.4"/><rect x="26" y="24.7" width="2.7" height="2.7" fill="none" stroke="#1e88d4" stroke-width="1.1"/><rect x="26" y="30.8" width="2.7" height="2.7" fill="none" stroke="#1e88d4" stroke-width="1.1"/><path d="M30 26 H35.5 M30 32.1 H35.5" stroke="#1e88d4" stroke-width="1.2"/></svg>
<svg class="a" style="left:746px;top:107px;" width="22" height="22" viewBox="0 0 22 22"><path d="M1.4 1.6 H10.5 V6.8 H1.4 Z M1.4 6.8 V14 H7.2" fill="none" stroke="#3f3f3f" stroke-width="1.3"/><path d="M16.2 13.6 H20.5 V20.1 H11.6 V17.5" fill="none" stroke="#3f3f3f" stroke-width="1.3"/><path d="M8 10.9 L14 16.2 M9.6 16.4 H14.4 V11.8" fill="none" stroke="#1e88d4" stroke-width="1.35"/></svg>
<svg class="a" style="left:746px;top:139px;" width="22" height="22" viewBox="0 0 22 22"><path d="M1.4 6.4 V1.7 H10.5 V4.2 M1.4 8 H4.6" fill="none" stroke="#3f3f3f" stroke-width="1.3"/><path d="M14.5 7.4 H20.5 V20.4 H11.6 V12.5 M11.6 14.6 H20.5" fill="none" stroke="#3f3f3f" stroke-width="1.3"/><path d="M6.8 6.2 L13 11.6 M8.6 11.8 H13.4 V7.2" fill="none" stroke="#1e88d4" stroke-width="1.35"/></svg>
<svg class="a" style="left:746px;top:171px;" width="22" height="22" viewBox="0 0 22 22"><path d="M3.6 17 V4.2 H17.6 M15 1.6 L17.8 4.2 L15 6.8 M.9 14.6 L3.6 17.4 L6.3 14.6 M3.8 4.4 L10 10.2 M6 10.4 H10.3 V6.2" fill="none" stroke="#1e88d4" stroke-width="1.35"/><path d="M12.6 12.9 L20.6 20.8 M20.6 12.9 L12.6 20.8" stroke="#e8383d" stroke-width="1.3"/></svg>
<svg class="a" style="left:913px;top:107px;" width="22" height="22" viewBox="0 0 22 22"><path d="M1.5 1.7 H15.6 L1.5 15.5 Z" fill="#f3f3f3" stroke="#3f3f3f" stroke-width="1.3" stroke-linejoin="miter"/></svg>
<div class="t" style="left:920.20px;top:107.85px;font-size:20px;color:#3a3a3a;transform:scaleX(0.9684);transform-origin:0 0;font-family:'Liberation Serif',serif;font-style:italic;">fx</div>
<svg class="a" style="left:913px;top:139px;" width="22" height="22" viewBox="0 0 22 22"><path d="M10.3 2.6 L2.2 18.8 H18.6 Z" fill="#fbdca0" stroke="#e9730c" stroke-width="1.6" stroke-linejoin="miter"/><path d="M10.3 7.2 V13.4" stroke="#333" stroke-width="1.7"/><path d="M7.3 15.6 L12.4 19.8 L21 11.2" fill="none" stroke="#fff" stroke-width="3.6"/><path d="M7.5 15.8 L12.4 19.6 L20.8 11.4" fill="none" stroke="#2e9b4e" stroke-width="1.4"/></svg>
<svg class="a" style="left:913px;top:171px;" width="22" height="22" viewBox="0 0 22 22"><circle cx="11" cy="10.9" r="9.5" fill="#fafafa" stroke="#3f3f3f" stroke-width="1.3"/></svg>
<div class="t" style="left:919.00px;top:172.62px;font-size:15.5px;color:#3a3a3a;transform:scaleX(1.0311);transform-origin:0 0;font-family:'Liberation Serif',serif;font-style:italic;">fx</div>
<svg class="a" style="left:985px;top:112px;" width="40" height="36" viewBox="0 0 40 36"><path d="M10.2 28.3 H1.9 V1.6 H36.3 V21.2 Z" fill="#f5f5f5" stroke="none"/><path d="M10.2 28.3 H1.9 V1.6 H36.3 V21.2 M1.9 6.3 H36.3" fill="none" stroke="#3f3f3f" stroke-width="1.45"/><path d="M21.5 21 L11.3 26.7 H38.9 L29.3 21" fill="none" stroke="#2b8fdb" stroke-width="1.4" stroke-linejoin="round"/><path d="M13.1 26.9 A4.9 6.6 0 0 0 22.9 26.9 M27.3 26.9 A4.9 6.6 0 0 0 37.1 26.9" fill="#fff" stroke="#2b8fdb" stroke-width="1.4"/></svg>
<svg class="a" style="left:1080.3px;top:109.3px;" width="24" height="35.4" viewBox="0 0 24 35.4"><rect x="0.8" y="0.8" width="22.4" height="33.8" fill="#fff" stroke="#666" stroke-width="1.6"/><rect x="4.4" y="4.2" width="15.8" height="6" fill="#8fc2ef" stroke="#1e78d0" stroke-width="1"/><rect x="4.10" y="12.80" width="3.3" height="3.3" fill="#3c3c3c"/><rect x="4.10" y="20.25" width="3.3" height="3.3" fill="#3c3c3c"/><rect x="4.10" y="27.70" width="3.3" height="3.3" fill="#3c3c3c"/><rect x="10.45" y="12.80" width="3.3" height="3.3" fill="#3c3c3c"/><rect x="10.45" y="20.25" width="3.3" height="3.3" fill="#3c3c3c"/><rect x="10.45" y="27.70" width="3.3" height="3.3" fill="#3c3c3c"/><rect x="16.80" y="12.80" width="3.3" height="3.3" fill="#3c3c3c"/><rect x="16.80" y="20.25" width="3.3" height="3.3" fill="#3c3c3c"/><rect x="16.80" y="27.70" width="3.3" height="3.3" fill="#3c3c3c"/></svg>
<svg class="a" style="left:1142.4px;top:118.2px;" width="15.3" height="19.8" viewBox="0 0 15.3 19.8"><rect x="0.7" y="0.7" width="13.9" height="18.400000000000002" fill="#fff" stroke="#555" stroke-width="1.4"/><rect x="2.9" y="2.7" width="9.5" height="3.1" fill="#8fc2ef" stroke="#1e78d0" stroke-width="1"/><rect x="2.80" y="7.50" width="2.2" height="2.2" fill="#3c3c3c"/><rect x="2.80" y="11.15" width="2.2" height="2.2" fill="#3c3c3c"/><rect x="2.80" y="14.80" width="2.2" height="2.2" fill="#3c3c3c"/><rect x="6.60" y="7.50" width="2.2" height="2.2" fill="#3c3c3c"/><rect x="6.60" y="11.15" width="2.2" height="2.2" fill="#3c3c3c"/><rect x="6.60" y="14.80" width="2.2" height="2.2" fill="#3c3c3c"/><rect x="10.40" y="7.50" width="2.2" height="2.2" fill="#3c3c3c"/><rect x="10.40" y="11.15" width="2.2" height="2.2" fill="#3c3c3c"/><rect x="10.40" y="14.80" width="2.2" height="2.2" fill="#3c3c3c"/></svg>
<svg class="a" style="left:1140px;top:159px;" width="21" height="20" viewBox="0 0 21 20"><rect x=".6" y=".8" width="19" height="3.6" fill="#e6e6e6"/><path d="M.6 .8 H19.6 V8 M.6 .8 V16.8 H7.5 L10.5 14.3 M.6 4.4 H19.6" fill="none" stroke="#6a6a6a" stroke-width="1.2"/><path d="M6.9 .8 V14 M13.2 .8 V8 M.6 9.2 H10.8 M.6 14 H10.8" fill="none" stroke="#a8a8a8" stroke-width="1.1"/><rect x="11.4" y="8.6" width="8.2" height="10" fill="#fff" stroke="#444" stroke-width="1.2"/><rect x="13.2" y="10.3" width="4.6" height="1.7" fill="#1e78d0"/><path d="M13 14 H18 M13 16.4 H18 M15.5 12.8 V17.6" stroke="#666" stroke-width=".9"/></svg>
<svg class="a" style="left:70px;top:845px;" width="21" height="19" viewBox="0 0 21 19"><circle cx="8.7" cy="2.9" r="2.2" fill="none" stroke="#222" stroke-width="1.25"/><path d="M7.2 4.9 C5 4.5 3 3 1.6 4 C.6 5 2 6.3 3.5 6.6 C5.5 7.2 5.6 8.5 5.6 10 C5.6 12.5 4.5 14 4.2 15.5 C4 17 5.5 18 6.8 16.3 M10.2 4.9 C12.5 4.5 14.5 2.5 15.8 3.8 C16.8 5 15.5 6.3 14 6.6 C12.3 7 12 8.3 12 10.6 M7.2 4.9 C8 5.5 9.4 5.5 10.2 4.9" fill="none" stroke="#222" stroke-width="1.25" stroke-linecap="round"/><path d="M9.3 13.3 L13.2 17.2 L19.4 10.6" fill="none" stroke="#222" stroke-width="1.3" stroke-linecap="round"/></svg>
<svg class="a" style="left:1017px;top:845px;" width="17" height="17" viewBox="0 0 17 17"><rect x=".7" y=".7" width="15.6" height="15.6" fill="none" stroke="#444" stroke-width="1.4"/><path d="M6 .7 V16.3 M11 .7 V16.3 M.7 6 H16.3 M.7 11 H16.3" stroke="#444" stroke-width="1.4"/></svg>
<svg class="a" style="left:1067px;top:845px;" width="18" height="17" viewBox="0 0 18 17"><rect x=".7" y=".7" width="16.6" height="15.6" rx="1" fill="#fff" stroke="#444" stroke-width="1.4"/><rect x="4.3" y="3.6" width="9.4" height="9.8" fill="none" stroke="#444" stroke-width="1.2"/><path d="M6.2 6.6 H11.8 M6.2 8.6 H11.8 M6.2 10.6 H11.8" stroke="#444" stroke-width="1.1"/></svg>
<svg class="a" style="left:1117px;top:845px;" width="18" height="17" viewBox="0 0 18 17"><path d="M.7 .7 H17.3 V16.3 H.7 Z M.7 9 H10.5 V.7 M5.6 .7 V9" fill="none" stroke="#444" stroke-width="1.4"/></svg>
<div class="a" style="left:435px;top:97px;width:86px;height:118px;border:3px solid #f53e3e;filter:drop-shadow(.6px 3px 2.2px rgba(0,0,0,.36))"></div>
</div></body></html>
